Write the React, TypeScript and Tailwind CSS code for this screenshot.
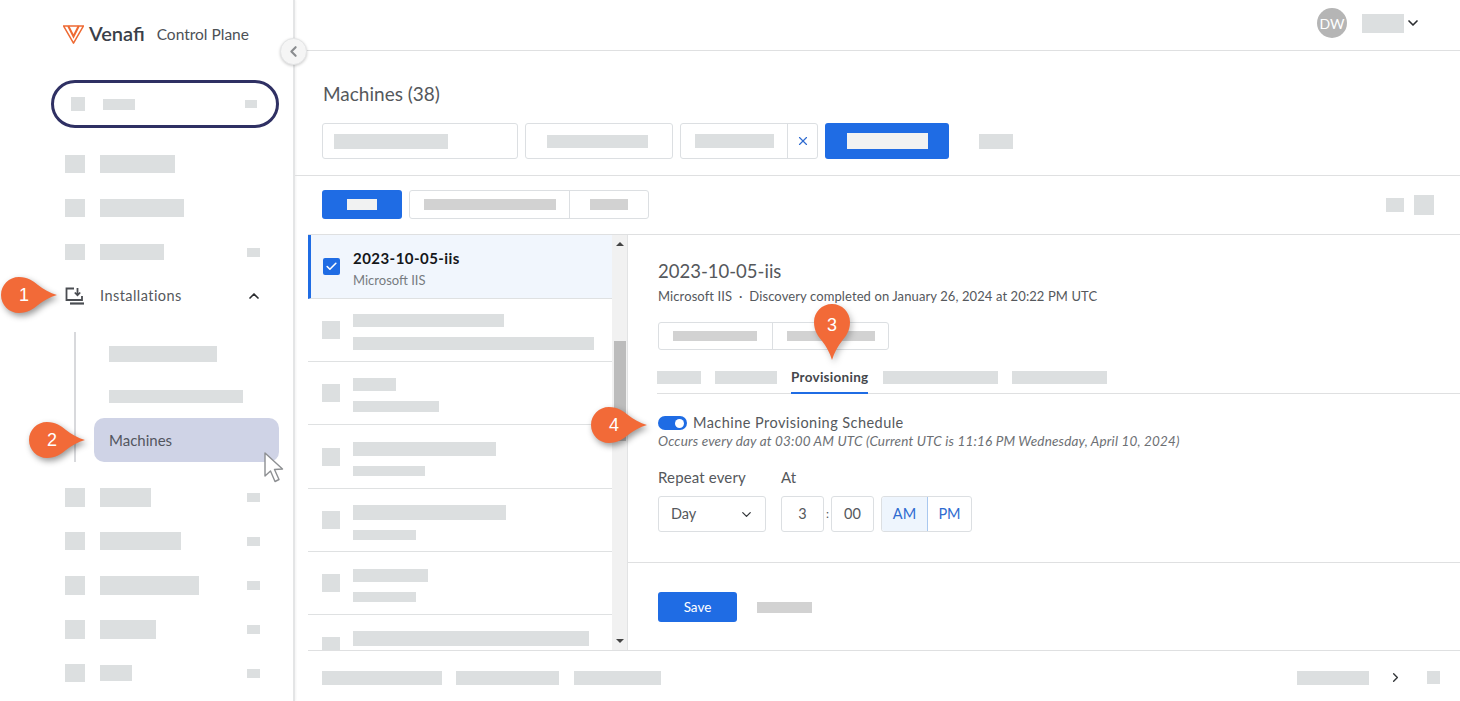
import React from "react";
import { ChevronDown, ChevronLeft, ChevronRight, ChevronUp, Check, X } from "lucide-react";

const Bar = ({ className = "" }: { className?: string }) => (
  <div className={`shrink-0 bg-[#dcdfe0] ${className}`} />
);

const NavRow = ({
  icon,
  bar,
  badge,
}: {
  icon: string;
  bar: string;
  badge?: boolean;
}) => (
  <div className="flex h-[44px] items-center pl-[65px] pr-[33px]">
    <Bar className={icon} />
    <Bar className={`ml-[15px] ${bar}`} />
    {badge && <Bar className="ml-auto h-[9px] w-[13px]" />}
  </div>
);

const ListRow = ({
  top,
  bottom,
  className = "",
}: {
  top: string;
  bottom: string;
  className?: string;
}) => (
  <div className={`flex items-center border-b border-[#dfe1e2] pl-[14px] ${className}`}>
    <Bar className="h-[18px] w-[18px]" />
    <div className="ml-[13px] mt-[4px] flex flex-col gap-[10px]">
      <Bar className={top} />
      <Bar className={bottom} />
    </div>
  </div>
);

// orange numbered marker with a tip on the right
const Callout = ({ n, className }: { n: string; className: string }) => (
  <div className={`absolute h-[36px] w-[56px] ${className}`}>
    <svg viewBox="0 0 56 36" className="absolute inset-0 h-full w-full drop-shadow-[2px_3px_3px_rgba(0,0,0,0.4)]">
      <path d="M18 0C27 0 32 4 37 8C42 12 49 16 56 18C49 20 42 24 37 28C32 32 27 36 18 36C8 36 0 28 0 18C0 8 8 0 18 0Z" fill="#f26a38" />
    </svg>
    <span className="absolute left-0 top-0 flex h-[36px] w-[46px] items-center justify-center font-['Liberation_Sans',sans-serif] text-[18px] text-white">
      {n}
    </span>
  </div>
);

export default function App() {
  return (
    <div className="relative flex h-[701px] w-[1460px] overflow-hidden bg-white font-['Lato',sans-serif] text-[#55585c]">
      {/* sidebar */}
      <aside className="flex w-[295px] shrink-0 flex-col border-r-2 border-[#e4e5e6] shadow-[1px_0_2px_rgba(0,0,0,0.05)]">
        <div className="flex h-[80px] items-start pl-[63px] pt-[23px]">
          <svg viewBox="0 0 22 19" className="mt-[2px] h-[19px] w-[21px]">
            <path d="M0.5 0.5H21.5L11 18.5Z" fill="none" stroke="#ee6a33" strokeWidth="1.6" strokeLinejoin="round" />
            <path d="M5.5 0.5L11 11.5L16.5 0.5" fill="none" stroke="#ee6a33" strokeWidth="2.2" />
          </svg>
          <span className="ml-[5px] text-[20px] font-semibold leading-[20px] text-[#3a4049]">Venafi</span>
          <span className="ml-[12px] mt-[1px] text-[15.5px] leading-[20px] text-[#4d5156]">Control Plane</span>
        </div>

        <div className="ml-[51px] flex h-[48px] w-[228px] items-center rounded-[24px] border-[3px] border-[#2f3063] pl-[17px] pr-[19px]">
          <Bar className="h-[14px] w-[14px]" />
          <Bar className="ml-[18px] h-[11px] w-[32px]" />
          <Bar className="ml-auto h-[8px] w-[12px]" />
        </div>

        <div className="mt-[14px]">
          <NavRow icon="h-[18px] w-[20px]" bar="h-[18px] w-[75px]" />
          <NavRow icon="h-[18px] w-[20px]" bar="h-[18px] w-[84px]" />
          <NavRow icon="h-[16px] w-[20px]" bar="h-[16px] w-[64px]" badge />
          <div className="flex h-[44px] items-center pl-[65px] pr-[31px]">
            <svg viewBox="0 0 20 18" className="h-[18px] w-[20px] shrink-0" fill="none" stroke="#4a4d52" strokeWidth="1.8">
              <path d="M9 1.5H1.5V13H17V9" />
              <path d="M12.5 1V8M9.8 5.5L12.5 8.3L15.2 5.5" />
              <path d="M5 16.5H19" strokeWidth="2.2" />
            </svg>
            <span className="ml-[15px] text-[14.5px] tracking-[0.45px]">Installations</span>
            <ChevronUp className="ml-auto h-[16px] w-[16px] text-[#2b2d30]" strokeWidth={2.5} />
          </div>
        </div>

        {/* installations submenu */}
        <div className="ml-[74px] mt-[14px] flex h-[130px] w-[205px] flex-col border-l-2 border-[#d8d9dc]">
          <Bar className="ml-[33px] mt-[14px] h-[16px] w-[108px]" />
          <Bar className="ml-[33px] mt-[28px] h-[13px] w-[134px]" />
          <div className="ml-[18px] mt-[15px] flex h-[44px] w-[185px] items-center rounded-[10px] bg-[#cfd3e6] pl-[15px] text-[15px] text-[#53565f]">
            Machines
          </div>
        </div>

        <div className="mt-[13px]">
          <NavRow icon="h-[19px] w-[20px]" bar="h-[19px] w-[51px]" badge />
          <NavRow icon="h-[18px] w-[20px]" bar="h-[18px] w-[81px]" badge />
          <NavRow icon="h-[19px] w-[20px]" bar="h-[19px] w-[99px]" badge />
          <NavRow icon="h-[19px] w-[20px]" bar="h-[19px] w-[56px]" badge />
          <NavRow icon="h-[18px] w-[20px]" bar="h-[16px] w-[32px]" badge />
        </div>
      </aside>

      {/* main */}
      <main className="flex min-w-0 flex-1 flex-col">
        <header className="flex h-[51px] shrink-0 items-center justify-end border-b border-[#dfe0e1] pb-[4px] pr-[39px]">
          <div className="flex h-[30px] w-[30px] items-center justify-center rounded-full bg-[#b5b5b5] text-[14px] text-white">
            DW
          </div>
          <Bar className="ml-[15px] h-[19px] w-[42px]" />
          <ChevronDown className="ml-[1px] h-[16px] w-[16px] text-[#2b2d30]" strokeWidth={2.5} />
        </header>

        <h1 className="ml-[28px] mt-[31px] h-[41px] text-[19px] leading-[24px] text-[#55585c]">Machines (38)</h1>

        <div className="ml-[27px] flex h-[36px] items-center">
          <div className="flex h-[36px] w-[196px] items-center rounded-[3px] border border-[#dcdfe2] pl-[11px]">
            <Bar className="h-[15px] w-[114px]" />
          </div>
          <div className="ml-[7px] flex h-[36px] w-[148px] items-center rounded-[3px] border border-[#dcdfe2] pl-[21px]">
            <Bar className="h-[13px] w-[101px]" />
          </div>
          <div className="ml-[7px] flex h-[36px] w-[138px] items-center rounded-[3px] border border-[#dcdfe2]">
            <div className="flex h-full w-[107px] items-center border-r border-[#dcdfe2] pl-[14px]">
              <Bar className="h-[14px] w-[79px]" />
            </div>
            <X className="ml-[8px] h-[14px] w-[14px] text-[#2f6bd0]" strokeWidth={2} />
          </div>
          <div className="ml-[7px] flex h-[36px] w-[124px] items-center justify-center rounded-[3px] bg-[#1f6ce4]">
            <div className="h-[16px] w-[81px] bg-[#f1f2f2]" />
          </div>
          <Bar className="ml-[30px] h-[15px] w-[34px]" />
        </div>

        <div className="mt-[16px] flex h-[44px] shrink-0 items-end border-t border-[#dfe0e1] pl-[27px] pr-[26px]">
          <div className="flex h-[29px] w-[80px] items-center justify-center rounded-[3px] bg-[#1f6ce4]">
            <div className="h-[11px] w-[30px] bg-[#f1f2f2]" />
          </div>
          <div className="ml-[7px] flex h-[29px] w-[240px] items-center rounded-[3px] border border-[#dcdfe2]">
            <div className="flex h-full w-[160px] items-center border-r border-[#dcdfe2] pl-[14px]">
              <div className="h-[11px] w-[132px] bg-[#d2d2d2]" />
            </div>
            <div className="ml-[20px] h-[11px] w-[38px] bg-[#d2d2d2]" />
          </div>
          <div className="ml-auto flex items-center gap-[10px] self-end pb-[4px]">
            <Bar className="h-[14px] w-[18px]" />
            <Bar className="h-[20px] w-[20px]" />
          </div>
        </div>

        {/* list and detail */}
        <section className="ml-[13px] mt-[15px] flex h-[417px] shrink-0 border-y border-[#dfe0e1]">
          <div className="flex w-[304px] shrink-0 flex-col overflow-hidden">
            <div className="flex h-[64px] shrink-0 items-center border-b border-l-[3px] border-b-[#dfe1e2] border-l-[#1f6ce4] bg-[#f1f6fd] pl-[12px]">
              <div className="flex h-[17px] w-[17px] items-center justify-center rounded-[2px] bg-[#1f6ce4]">
                <Check className="h-[13px] w-[13px] text-white" strokeWidth={3} />
              </div>
              <div className="ml-[13px] mt-[4px]">
                <div className="text-[15px] font-bold leading-[20px] tracking-[0.45px] text-[#15171a]">2023-10-05-iis</div>
                <div className="mt-[3px] text-[13px] leading-[18px] text-[#777b80]">Microsoft IIS</div>
              </div>
            </div>
            <ListRow className="h-[63px] shrink-0" top="h-[13px] w-[151px]" bottom="h-[13px] w-[241px]" />
            <ListRow className="h-[63px] shrink-0" top="h-[13px] w-[43px]" bottom="h-[11px] w-[86px]" />
            <ListRow className="h-[64px] shrink-0" top="h-[14px] w-[143px]" bottom="h-[10px] w-[72px]" />
            <ListRow className="h-[63px] shrink-0" top="h-[15px] w-[153px]" bottom="h-[10px] w-[63px]" />
            <ListRow className="h-[63px] shrink-0" top="h-[13px] w-[75px]" bottom="h-[10px] w-[63px]" />
            <ListRow className="h-[63px] shrink-0" top="h-[15px] w-[236px]" bottom="h-[10px] w-[63px]" />
          </div>

          {/* scrollbar */}
          <div className="relative flex w-[16px] shrink-0 flex-col items-center justify-between border-r border-[#e2e3e4] bg-[#f1f1f1] py-[7px]">
            <div className="h-0 w-0 border-x-[4px] border-b-[4px] border-x-transparent border-b-[#444]" />
            <div className="absolute left-[2px] top-[106px] h-[100px] w-[12px] bg-[#bcbcbc]" />
            <div className="h-0 w-0 border-x-[4px] border-t-[4px] border-x-transparent border-t-[#444]" />
          </div>

          <div className="flex min-w-0 flex-1 flex-col">
            <div className="h-[328px] shrink-0 border-b border-[#dfe0e1] pl-[30px]">
              <h2 className="mt-[24px] text-[18.5px] leading-[24px] text-[#55585c]">2023-10-05-iis</h2>
              <p className="mt-[4px] text-[13px] leading-[18px] tracking-[0.1px] text-[#55585c]">
                Microsoft IIS &nbsp;·&nbsp; Discovery completed on January 26, 2024 at 20:22 PM UTC
              </p>
              <div className="mt-[17px] flex h-[28px] w-[231px] items-center rounded-[3px] border border-[#dcdfe2]">
                <div className="flex h-full w-[114px] items-center border-r border-[#dcdfe2] pl-[14px]">
                  <div className="h-[10px] w-[84px] bg-[#d2d2d2]" />
                </div>
                <div className="ml-[14px] h-[10px] w-[88px] bg-[#d2d2d2]" />
              </div>

              <div className="-ml-px mt-[16px] flex h-[28px] items-start border-b border-[#dfe0e1]">
                <Bar className="mt-[5px] h-[13px] w-[44px]" />
                <Bar className="ml-[14px] mt-[5px] h-[13px] w-[62px]" />
                <div className="ml-[14px] h-[28px] border-b-2 border-[#1f6ce4] pt-[2px] text-[13.5px] font-bold leading-[18px] tracking-[0.28px] text-[#44474b]">
                  Provisioning
                </div>
                <Bar className="ml-[15px] mt-[5px] h-[13px] w-[115px]" />
                <Bar className="ml-[14px] mt-[5px] h-[13px] w-[95px]" />
              </div>

              <div className="mt-[20px] flex h-[18px] items-center">
                <div className="flex h-[14px] w-[29px] items-center justify-end rounded-full bg-[#1f6ce4] pr-[3px]">
                  <div className="h-[9px] w-[9px] rounded-full bg-white" />
                </div>
                <span className="ml-[6px] text-[14.5px] tracking-[0.45px]">Machine Provisioning Schedule</span>
              </div>
              <p className="text-[13.5px] italic leading-[18px] tracking-[0.17px] text-[#6d7074]">
                Occurs every day at 03:00 AM UTC (Current UTC is 11:16 PM Wednesday, April 10, 2024)
              </p>

              <div className="mt-[17px] flex text-[15px] leading-[20px] tracking-[0.15px]">
                <span className="w-[123px]">Repeat every</span>
                <span>At</span>
              </div>
              <div className="mt-[9px] flex h-[36px] items-center text-[14.5px]">
                <div className="flex h-[36px] w-[108px] items-center justify-between rounded-[3px] border border-[#dcdfe2] pl-[12px] pr-[11px]">
                  Day
                  <ChevronDown className="h-[15px] w-[15px] text-[#33363a]" strokeWidth={2} />
                </div>
                <div className="ml-[15px] flex h-[36px] w-[43px] items-center justify-center rounded-[3px] border border-[#dcdfe2]">3</div>
                <span className="w-[7px] text-center text-[12px]">:</span>
                <div className="flex h-[36px] w-[43px] items-center justify-center rounded-[3px] border border-[#dcdfe2]">00</div>
                <div className="ml-[7px] flex h-[36px] w-[91px] rounded-[3px] border border-[#dcdfe2] text-[#2f6bd0]">
                  <div className="flex w-[46px] items-center justify-center rounded-l-[3px] border-r border-[#a9c8ef] bg-[#eef5fd]">AM</div>
                  <div className="flex flex-1 items-center justify-center">PM</div>
                </div>
              </div>
            </div>

            <div className="flex flex-1 items-start pl-[30px] pt-[29px]">
              <button className="flex h-[30px] w-[79px] items-center justify-center rounded-[3px] bg-[#1f6ce4] text-[13.5px] text-white">
                Save
              </button>
              <div className="ml-[20px] mt-[10px] h-[11px] w-[55px] bg-[#d2d2d2]" />
            </div>
          </div>
        </section>

        <footer className="ml-[27px] mt-[19px] flex h-[15px] items-center pr-[20px]">
          <Bar className="h-[14px] w-[120px]" />
          <Bar className="ml-[14px] h-[14px] w-[103px]" />
          <Bar className="ml-[15px] h-[14px] w-[87px]" />
          <Bar className="ml-auto h-[14px] w-[72px]" />
          <ChevronRight className="ml-[19px] h-[15px] w-[15px] text-[#33363a]" strokeWidth={2.2} />
          <Bar className="ml-[24px] h-[13px] w-[13px]" />
        </footer>
      </main>

      {/* overlays */}
      <button className="absolute left-[280px] top-[38px] flex h-[27px] w-[27px] items-center justify-center rounded-full border border-[#e4e5e6] bg-[#f5f5f5] shadow-[0_1px_3px_rgba(0,0,0,0.2)]">
        <ChevronLeft className="h-[17px] w-[17px] text-[#8a8c8f]" strokeWidth={3} />
      </button>

      <Callout n="1" className="left-[1px] top-[277px]" />
      <Callout n="2" className="left-[29px] top-[422px]" />
      <Callout n="4" className="left-[591px] top-[407px]" />

      <div className="absolute left-[814px] top-[304px] h-[56px] w-[36px]">
        <svg viewBox="0 0 36 56" className="absolute inset-0 h-full w-full drop-shadow-[2px_3px_3px_rgba(0,0,0,0.25)]">
          <path d="M18 0C8 0 0 8 0 18C0 27 4 32 8 37C12 42 16 49 18 56C20 49 24 42 28 37C32 32 36 27 36 18C36 8 28 0 18 0Z" fill="#f26a38" />
        </svg>
        <span className="absolute left-0 top-0 flex h-[42px] w-[36px] items-center justify-center font-['Liberation_Sans',sans-serif] text-[18px] text-white">
          3
        </span>
      </div>

      <svg viewBox="0 0 20 31" className="absolute left-[264px] top-[452px] h-[31px] w-[20px]">
        <path d="M1 1L1 24L6.5 19L11 29.5L15 27.5L10.5 17.5L18.5 17Z" fill="#fff" stroke="#8d8f92" strokeWidth="1.4" strokeLinejoin="round" />
      </svg>
    </div>
  );
}
